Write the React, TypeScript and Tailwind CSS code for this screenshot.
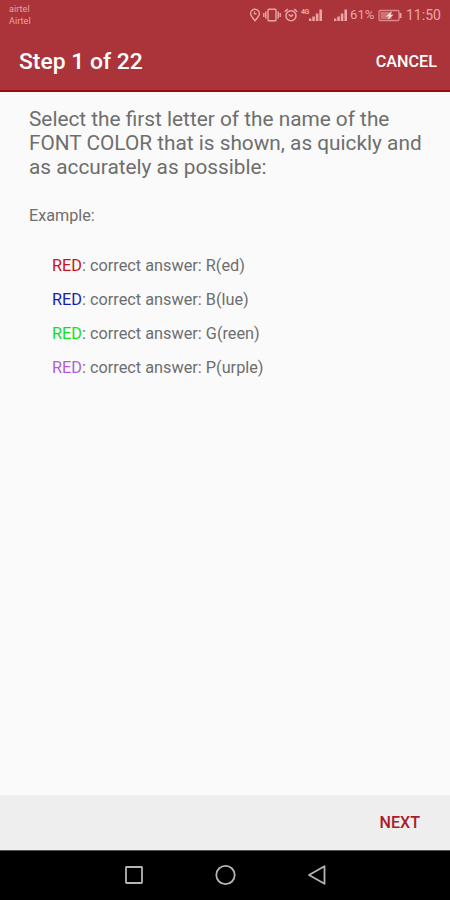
import React from "react";

const examples = [
  { color: "text-[#c8141c]", answer: "R(ed)" },
  { color: "text-[#1420b4]", answer: "B(lue)" },
  { color: "text-[#14dc1e]", answer: "G(reen)" },
  { color: "text-[#b45ad8]", answer: "P(urple)" },
];

function SignalBars() {
  return (
    <svg width="14" height="13" viewBox="0 0 14 13" fill="currentColor">
      <rect x="0" y="9.5" width="2.4" height="2.5" />
      <rect x="3.3" y="7.5" width="2.5" height="4.5" />
      <rect x="6.8" y="4.5" width="2.6" height="7.5" />
      <rect x="10.4" y="0.5" width="2.6" height="11.5" />
    </svg>
  );
}

function StatusBar() {
  return (
    <div className="flex h-[30px] shrink-0 justify-between pl-[9px] text-[#eba6a4]">
      <div className="pt-[3px] text-[9px] leading-[12.3px] tracking-[0.08px]">
        <div>airtel</div>
        <div>Airtel</div>
      </div>
      <div className="flex h-[30px] w-[201px] items-center">
        <svg width="12" height="14" viewBox="0 0 12 14" fill="none" stroke="currentColor" strokeWidth="1.4">
          <path d="M6 12.7C4 10.3 1.6 8 1.6 5.6a4.4 4.4 0 0 1 8.8 0C10.4 8 8 10.3 6 12.7Z" />
          <path d="M5.5 3.5v2.3h2" strokeWidth="1.2" />
        </svg>
        <svg className="ml-[2px]" width="18" height="14" viewBox="0 0 18 14" fill="none" stroke="currentColor" strokeWidth="1.4">
          <rect x="5" y="1.2" width="8" height="11.6" rx="0.8" />
          <path d="M2.8 3.5v7M15.2 3.5v7M.8 5v4M17.2 5v4" />
        </svg>
        <svg className="ml-[3px]" width="14" height="14" viewBox="0 0 14 14" fill="none" stroke="currentColor" strokeWidth="1.5">
          <circle cx="7" cy="7.8" r="5" />
          <path d="M.8 3.8 3.8 1.1M13.2 3.8 10.2 1.1M4.7 6.5 7 8.4l2.2-1.8" />
        </svg>
        <div className="ml-[3px] h-[14px] w-2 text-[7px] leading-[8px] font-bold tracking-[-0.5px]">4G</div>
        <SignalBars />
        <div className="ml-[11px] flex">
          <SignalBars />
        </div>
        <div className="ml-[2px] w-[28px] text-[13.2px] leading-none whitespace-nowrap">61%</div>
        <svg width="25" height="13" viewBox="0 0 25 13">
          <rect x="1" y="1.5" width="20" height="10" rx="1" fill="none" stroke="currentColor" strokeWidth="1.3" opacity="0.75" />
          <rect x="2.5" y="3" width="11" height="7" fill="currentColor" opacity="0.55" />
          <path d="M22.5 4v5" stroke="currentColor" strokeWidth="2" />
          <path d="m14 2-6 5.5h3.2L9.5 11l6-5.2h-3.2Z" fill="#ffe4df" />
        </svg>
        <div className="ml-[3px] text-[14px] leading-none whitespace-nowrap">11:50</div>
      </div>
    </div>
  );
}

export default function App() {
  return (
    <div className="flex h-[900px] w-[450px] flex-col overflow-hidden bg-[#fafafa] font-[Roboto,sans-serif] text-[#6e6e6e]">
      <header className="flex h-[92px] shrink-0 flex-col border-b-2 border-[#980b10] bg-[#aa343a]">
        <StatusBar />
        <div className="flex h-[62px] items-center justify-between pt-[4px] pr-[13px] pl-[19px] text-white">
          <h1 className="text-[22.9px] font-medium">Step 1 of 22</h1>
          <button className="text-[16.2px] font-medium">CANCEL</button>
        </div>
      </header>
      <main className="flex-1 pt-[15px] pl-[29px]">
        <p className="text-[20.8px] leading-[24.2px] whitespace-nowrap">
          Select the first letter of the name of the
          <br />
          FONT COLOR that is shown, as quickly and
          <br />
          as accurately as possible:
        </p>
        <p className="mt-[26px] text-[16.2px] leading-[20px]">Example:</p>
        <ul className="mt-[23px] pl-[23px] text-[16.3px] leading-[34px]">
          {examples.map(({ color, answer }) => (
            <li key={answer}>
              <span className={color}>RED</span>: correct answer: {answer}
            </li>
          ))}
        </ul>
      </main>
      <footer className="flex h-[55px] shrink-0 items-center justify-end bg-[#eeeeee] pt-px pr-[30px]">
        <button className="text-[16.1px] font-medium text-[#a81c2c]">NEXT</button>
      </footer>
      <nav className="flex h-[50px] shrink-0 items-center border-t border-[#555] bg-black pl-[124px] text-[#b4b4b4]">
        <svg className="-mt-px" width="204" height="22" viewBox="0 0 204 22" fill="none" stroke="currentColor" strokeWidth="1.8">
          <rect x="2" y="3" width="16" height="16" rx="0.5" />
          <circle cx="101.5" cy="11" r="9.2" />
          <path d="M200.5 2.2v17.6L185 11Z" strokeLinejoin="round" />
        </svg>
      </nav>
    </div>
  );
}
